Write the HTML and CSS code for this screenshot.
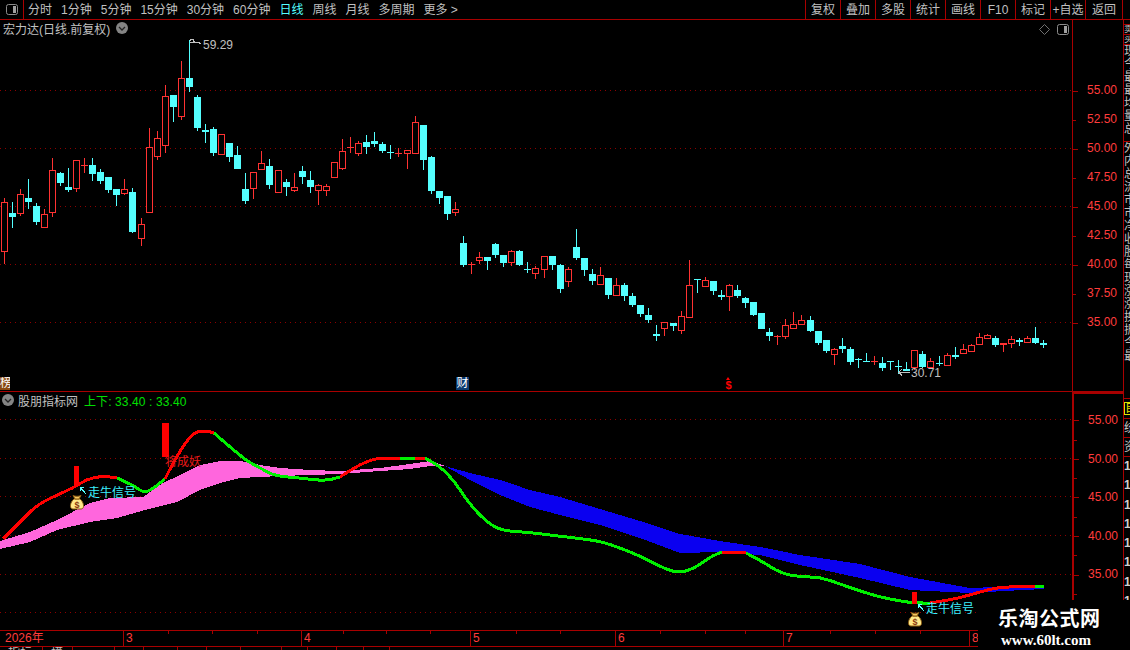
FILE: index.html
```html
<!DOCTYPE html>
<html lang="zh-CN">
<head>
    <meta charset="UTF-8">
    <title>宏力达 日线</title>
    <link rel="stylesheet" href="styles.css">
</head>
<body>
    <div class="app">
        <header class="toolbar">
            <div class="side-toggle">
                <svg class="toggle-icon" viewBox="0 0 12 11"><rect x="0.5" y="0.5" width="11" height="10" rx="2" class="toggle-frame"/><rect x="7" y="2" width="3" height="7" class="toggle-fill"/></svg>
            </div>
            <nav class="periods">
                <span>分时</span>
                <span>1分钟</span>
                <span>5分钟</span>
                <span>15分钟</span>
                <span>30分钟</span>
                <span>60分钟</span>
                <span class="active">日线</span>
                <span>周线</span>
                <span>月线</span>
                <span>多周期</span>
                <span>更多 &gt;</span>
            </nav>
            <nav class="actions">
                <span>复权</span>
                <span>叠加</span>
                <span>多股</span>
                <span>统计</span>
                <span>画线</span>
                <span>F10</span>
                <span>标记</span>
                <span>+自选</span>
                <span>返回</span>
            </nav>
        </header>

        <div class="workspace">
            <main class="charts">
                <section class="pane pane-price">
                    <div class="plot">
                        <svg class="chart" id="priceChart" viewBox="0 20 1072 371">
                            <g id="priceGrid"></g>
                            <g id="candles"></g>
                            <path class="note-line" d="M190 41v-2h3v3h-3M193 41l3 2 2-1 3 2"/>
                            <path class="note-line" d="M910 372h-11l3-3m-3 3l3 4"/>
                        </svg>
                        <div class="pane-title title-price">
                            宏力达(日线.前复权)
                            <svg class="chevron" viewBox="0 0 12 12"><circle cx="6" cy="6" r="6"/><path d="M3 5l3 3 3-3"/></svg>
                        </div>
                        <div class="price-note note-high">59.29</div>
                        <div class="price-note note-low">30.71</div>
                        <div class="pane-tools">
                            <svg class="diamond" viewBox="0 0 11 11"><path d="M5.5 0.5l5 5-5 5-5-5z"/></svg>
                            <svg class="toggle-icon" viewBox="0 0 12 11"><rect x="0.5" y="0.5" width="11" height="10" rx="2" class="toggle-frame"/><rect x="7" y="2" width="3" height="7" class="toggle-fill"/></svg>
                        </div>
                        <span class="event-tag tag-rank">榜</span>
                        <span class="event-tag tag-money">财</span>
                        <span class="event-tag tag-dollar">$</span>
                    </div>
                    <div class="axis axis-price">
                        <div class="tick">55.00</div>
                        <div class="tick minor">52.50</div>
                        <div class="tick">50.00</div>
                        <div class="tick minor">47.50</div>
                        <div class="tick">45.00</div>
                        <div class="tick minor">42.50</div>
                        <div class="tick">40.00</div>
                        <div class="tick minor">37.50</div>
                        <div class="tick">35.00</div>
                    </div>
                </section>

                <section class="pane pane-index">
                    <div class="plot">
                        <svg class="chart" id="indexChart" viewBox="0 392 1072 238">
                            <g id="indexGrid"></g>
                            <g id="bands"></g>
                            <g id="trend"></g>
                            <rect class="signal" x="74" y="466" width="5" height="20"/>
                            <rect class="signal" x="162" y="423" width="7" height="34"/>
                            <rect class="signal" x="912" y="592" width="5" height="12"/>
                            <path class="cyan-arrow" d="M86 494l-6-7m0 0v4m0-4h4"/>
                            <path class="cyan-arrow" d="M924 611l-6-7m0 0v4m0-4h4"/>
                            <g class="money-bag" transform="translate(70 495)">
                                <path class="bag-body" d="M4 4C0 7-1 14 3 14h8c4 0 3-7-1-10z"/>
                                <path class="bag-neck" d="M3 0.5c2 1 6 1 8 0l-2 3.500h-4z"/>
                                <text class="bag-sign" x="7" y="12.500">$</text>
                            </g>
                            <g class="money-bag" transform="translate(908 612)">
                                <path class="bag-body" d="M4 4C0 7-1 14 3 14h8c4 0 3-7-1-10z"/>
                                <path class="bag-neck" d="M3 0.5c2 1 6 1 8 0l-2 3.500h-4z"/>
                                <text class="bag-sign" x="7" y="12.500">$</text>
                            </g>
                        </svg>
                        <div class="pane-title title-index">
                            <svg class="chevron" viewBox="0 0 12 12"><circle cx="6" cy="6" r="6"/><path d="M3 5l3 3 3-3"/></svg>
                            股朋指标网
                            <span class="index-values">上下: 33.40 : 33.40</span>
                        </div>
                        <span class="signal-label cyan label-first">走牛信号</span>
                        <span class="signal-label cyan label-last">走牛信号</span>
                        <span class="signal-label red label-demon">将成妖</span>
                    </div>
                    <div class="axis axis-index">
                        <div class="tick">55.00</div>
                        <div class="tick">50.00</div>
                        <div class="tick">45.00</div>
                        <div class="tick">40.00</div>
                        <div class="tick">35.00</div>
                    </div>
                </section>

                <div class="timeline">
                    <span>2026年</span>
                    <span>3</span>
                    <span>4</span>
                    <span>5</span>
                    <span>6</span>
                    <span>7</span>
                    <span>8</span>
                    <svg class="time-ticks" viewBox="0 0 1072 4"><path d="M168 0v3M212 0v3M257 0v3M343 0v3M386 0v3M430 0v3M516 0v3M560 0v3M660 0v3M705 0v3M745 0v3M830 0v3M875 0v3M920 0v3"/></svg>
                </div>
            </main>

            <aside class="quote-strip">
                <div class="strip-row row-gap"></div>
                <div class="strip-row row-thin">卖</div>
                <div class="strip-row row-thin">买</div>
                <div class="strip-row row-list">现价今开最高最低均价量比总量</div>
                <div class="strip-row row-long">外盘内盘总股流通市值市盈净资收益股本每股现量涨跌涨幅换手振幅今开最</div>
                <div class="strip-row row-box"><span class="strip-flag">自</span></div>
                <div class="strip-row row-mid">统</div>
                <div class="strip-row row-mid">资</div>
                <div class="strip-digits">
                    <span>1</span><span>1</span><span>1</span><span>1</span><span>1</span><span>1</span><span>1</span><span>1</span>
                </div>
            </aside>
        </div>

        <div class="tabs">
            <span>指标</span><span>模</span><span></span><span></span><span></span><span></span><span></span><span></span><span></span><span></span><span></span><span></span>
        </div>

        <div class="watermark">
            <div class="mark-name">乐淘公式网</div>
            <div class="mark-url">www.60lt.com</div>
        </div>
    </div>

    <script src="chart.js"></script>
</body>
</html>
```

FILE: styles.css
```css
* {
    margin: 0;
    padding: 0;
    box-sizing: border-box;
}

html, body {
    height: 100%;
    background: #000;
    overflow: hidden;
}

.app {
    position: relative;
    display: flex;
    flex-direction: column;
    height: 650px;
    color: #c0c0c0;
    font-family: "Liberation Sans", "Noto Sans CJK SC", sans-serif;
    font-size: 12px;
}

/* Top toolbar */
.toolbar {
    display: flex;
    flex: none;
    height: 20px;
    line-height: 20px;
    border-bottom: 1px solid #a80000;
}

.side-toggle {
    display: flex;
    align-items: center;
    justify-content: center;
    width: 24px;
    border-right: 1px solid #a80000;
}

.toggle-icon {
    width: 12px;
    height: 11px;
}

.toggle-frame {
    fill: none;
    stroke: #8c8c8c;
}

.toggle-fill {
    fill: #a0a0a0;
}

.periods {
    display: flex;
    gap: 9px;
    padding-left: 4px;
}

.periods .active {
    color: #54ffff;
}

.actions {
    display: flex;
    margin-left: auto;
    margin-right: 7px;
}

.actions span {
    width: 35px;
    text-align: center;
    white-space: nowrap;
    border-left: 1px solid #a80000;
}

.actions span:last-child {
    width: 38px;
    border-right: 1px solid #a80000;
}

/* Chart area */
.workspace {
    display: flex;
    flex: none;
    height: 626px;
}

.charts {
    display: flex;
    flex-direction: column;
    width: 1123px;
}

.pane {
    display: flex;
}

.pane-price {
    flex: none;
    height: 372px;
    border-bottom: 1px solid #a80000;
}

.pane-index {
    flex: none;
    height: 238px;
}

.plot {
    position: relative;
    width: 1072px;
    overflow: hidden;
}

.chart {
    display: block;
    width: 1072px;
    height: 100%;
    shape-rendering: crispEdges;
}

.grid-line {
    stroke: #8c0000;
    stroke-dasharray: 1 4;
    shape-rendering: auto;
}

.note-line {
    fill: none;
    stroke: #c0c0c0;
}

.pane-title {
    position: absolute;
    display: flex;
    align-items: center;
    white-space: nowrap;
    height: 16px;
}

.title-price {
    top: 0;
    left: 3px;
    gap: 6px;
}

.title-index {
    top: 0;
    left: 2px;
    gap: 4px;
}

.chevron {
    width: 12px;
    height: 12px;
    flex: none;
}

.chevron circle {
    fill: #848484;
}

.chevron path {
    fill: none;
    stroke: #222;
    stroke-width: 1.3;
}

.index-values {
    margin-left: 2px;
    color: #00e000;
    letter-spacing: 0.1px;
}

.price-note {
    position: absolute;
}

.note-high {
    top: 18px;
    left: 203px;
}

.note-low {
    top: 346px;
    left: 911px;
}

.pane-tools {
    position: absolute;
    top: 4px;
    right: 3px;
    display: flex;
    align-items: center;
    gap: 7px;
}

.diamond {
    width: 11px;
    height: 11px;
}

.diamond path {
    fill: none;
    stroke: #707070;
}

.event-tag {
    position: absolute;
    top: 357px;
    height: 13px;
    line-height: 13px;
    text-align: center;
    overflow: hidden;
}

.tag-rank {
    left: 0;
    width: 10px;
    background: #8a4a12;
    color: #fff;
}

.tag-money {
    left: 456px;
    width: 13px;
    background: #0a3a70;
    color: #fff;
}

.tag-dollar {
    left: 724px;
    width: 9px;
    color: #ff0000;
    font-weight: bold;
    font-size: 11px;
    line-height: 17px;
}

/* little up marker above the dollar sign */
.tag-dollar::before {
    content: "";
    position: absolute;
    top: 0;
    left: 2px;
    border-left: 2px solid transparent;
    border-right: 2px solid transparent;
    border-bottom: 3px solid #ff0000;
}

.signal {
    fill: #ff0000;
}

.cyan-arrow {
    fill: none;
    stroke: #54ffff;
}

.bag-body {
    fill: #ffe98a;
    stroke: #8a5a10;
    shape-rendering: auto;
}

.bag-neck {
    fill: #f4c860;
    stroke: #8a5a10;
    shape-rendering: auto;
}

.bag-sign {
    fill: #8a3a10;
    font-size: 9px;
    font-weight: bold;
    text-anchor: middle;
}

.signal-label {
    position: absolute;
    white-space: nowrap;
}

.cyan {
    color: #3cf0ff;
}

.red {
    color: #e81818;
}

.label-first {
    top: 91px;
    left: 88px;
}

.label-last {
    top: 207px;
    left: 926px;
}

.label-demon {
    top: 60px;
    left: 165px;
}

/* Price axes */
.axis {
    flex: 1;
    color: #ff3c3c;
    border-left: 1px solid #a80000;
}

.axis-price {
    padding-top: 56px;
}

.axis-index {
    padding-top: 7px;
    border-left-width: 2px;
    border-top: 2px solid #a80000;
}

.tick {
    position: relative;
    padding-left: 14px;
}

.axis-price .tick {
    height: 29px;
    line-height: 29px;
}

.axis-index .tick {
    height: 38.6px;
    line-height: 38.6px;
}

.tick::before {
    content: "";
    position: absolute;
    left: 0;
    top: 50%;
    width: 5px;
    height: 1px;
    background: #a80000;
}

.tick.minor::before {
    width: 3px;
}

.axis-index .tick::after {
    content: "";
    position: absolute;
    left: 0;
    top: 100%;
    width: 3px;
    height: 1px;
    background: #a80000;
}

/* Time axis */
.timeline {
    position: relative;
    display: grid;
    grid-template-columns: 123px 178px 169px 145px 168px 186px 100px;
    height: 17px;
    line-height: 15px;
    color: #ff3c3c;
    border-top: 1px solid #a80000;
    border-bottom: 1px solid #a80000;
}

.timeline span {
    padding-left: 2px;
    border-left: 1px solid #a80000;
}

.timeline span:first-child {
    padding-left: 5px;
    border-left: none;
}

.time-ticks {
    position: absolute;
    top: 0;
    left: 0;
    width: 1072px;
    height: 4px;
    shape-rendering: crispEdges;
}

.time-ticks path {
    stroke: #a80000;
}

/* Clipped quote column on the right */
.quote-strip {
    flex: 1;
    display: flex;
    flex-direction: column;
    overflow: hidden;
    border-left: 1px solid #a80000;
    line-height: 13px;
}

.strip-row {
    flex: none;
    width: 24px;
    overflow: hidden;
    word-break: break-all;
    border-bottom: 1px solid #a80000;
}

.row-gap {
    height: 5px;
}

.row-thin {
    height: 10px;
    font-size: 9px;
    line-height: 9px;
}

.row-list {
    height: 97px;
}

.row-long {
    height: 257px;
}

.row-box {
    height: 20px;
    padding-top: 3px;
}

.strip-flag {
    display: block;
    width: 14px;
    height: 13px;
    color: #e0e000;
    border: 1px solid #e0e000;
    line-height: 11px;
}

.row-mid {
    height: 19px;
    line-height: 18px;
}

.strip-digits {
    display: flex;
    flex-direction: column;
    font-weight: bold;
    color: #d0d0d0;
}

.strip-digits span {
    height: 19.3px;
    line-height: 19px;
}

/* Bottom tab row, mostly below the visible area */
.tabs {
    display: grid;
    grid-template-columns: 43px 30px 42px 29px 34px 29px 34px 41px 26px 29px 27px 26px;
    flex: none;
    height: 4px;
    overflow: hidden;
    line-height: 14px;
}

.tabs span {
    padding-left: 8px;
    border-right: 1px solid #a80000;
    white-space: nowrap;
    overflow: hidden;
}

/* Site watermark over the lower right corner */
.watermark {
    position: absolute;
    top: 600px;
    left: 978px;
    right: 0;
    bottom: 0;
    padding: 8px 0 0 20px;
    background: #000;
    color: #fff;
}

.mark-name {
    font-size: 20px;
    font-weight: bold;
    line-height: 22px;
    letter-spacing: 0.5px;
    white-space: nowrap;
}

.mark-url {
    margin: 2px 0 0 3px;
    font-family: "Liberation Serif", serif;
    font-size: 15px;
    font-weight: bold;
    line-height: 16px;
    white-space: nowrap;
}
```

FILE: chart.js
```js
// x, body top, body bottom, high, low (all in page pixels), r = up, c = down
const candles = [
    [4,202,252,198,264,'r'],[12,213,217,202,228,'c'],[20,194,214,189,216,'r'],[28,198,202,179,209,'c'],
    [36,206,222,203,225,'c'],[44,214,228,209,228,'r'],[52,170,213,158,217,'r'],[60,173,183,172,186,'c'],
    [68,187,190,168,192,'c'],[76,160,189,160,192,'r'],[84,165,166,158,173,'r'],[92,165,174,158,181,'c'],
    [100,172,181,169,184,'c'],[108,177,190,177,193,'c'],[116,189,195,189,206,'c'],[124,189,194,179,195,'r'],
    [132,192,232,188,233,'c'],[141,224,239,218,246,'r'],[149,147,213,128,213,'r'],[157,138,157,131,160,'r'],
    [165,96,146,85,153,'r'],[173,95,107,95,122,'c'],[181,78,117,61,120,'r'],[189,78,87,40,92,'c'],
    [197,97,128,95,131,'c'],[205,130,132,124,143,'c'],[213,129,153,127,156,'c'],[221,134,155,134,155,'r'],
    [229,143,157,143,162,'c'],[237,155,169,146,169,'c'],[245,189,201,173,204,'c'],[253,172,189,172,199,'r'],
    [261,163,170,151,170,'r'],[269,166,185,159,189,'c'],[278,170,193,170,193,'r'],[286,182,187,179,196,'c'],
    [294,187,191,173,192,'r'],[302,171,177,166,184,'c'],[310,180,187,171,193,'c'],[318,185,191,184,205,'r'],
    [326,186,191,184,196,'r'],[334,162,178,162,178,'r'],[342,151,169,139,170,'r'],[350,147,148,137,153,'r'],
    [358,143,154,141,156,'r'],[366,142,147,135,154,'c'],[374,141,144,132,147,'c'],[382,144,151,142,153,'c'],
    [390,152,153,145,159,'c'],[398,153,154,148,157,'r'],[407,150,154,150,169,'r'],[415,122,154,116,154,'r'],
    [423,125,160,125,170,'c'],[431,157,191,156,194,'c'],[439,191,198,191,204,'c'],[447,196,214,196,220,'c'],
    [455,209,213,202,216,'r'],[463,243,265,236,267,'c'],[471,264,265,262,274,'r'],[479,257,261,252,264,'r'],
    [487,257,261,257,270,'c'],[495,244,255,243,258,'c'],[503,255,263,255,267,'c'],[511,251,263,250,266,'r'],
    [519,251,265,250,266,'c'],[527,269,270,262,273,'c'],[535,268,274,266,279,'r'],[544,256,270,256,278,'r'],
    [552,256,265,256,270,'c'],[560,265,289,264,293,'c'],[568,269,282,267,287,'r'],[576,247,258,229,260,'c'],
    [584,258,270,258,276,'c'],[592,274,281,269,285,'c'],[600,275,285,267,285,'r'],[608,278,295,278,299,'c'],
    [616,285,296,278,296,'r'],[624,285,296,283,301,'c'],[632,296,305,293,307,'c'],[640,305,314,305,317,'c'],
    [648,315,320,308,323,'c'],[656,334,336,325,341,'c'],[664,322,329,322,336,'r'],[673,323,326,323,331,'c'],
    [681,316,331,311,334,'r'],[689,285,318,260,318,'r'],[697,279,280,279,293,'c'],[705,280,287,277,287,'r'],
    [713,281,291,281,295,'c'],[721,295,297,290,300,'c'],[729,285,297,284,311,'r'],[737,290,296,285,298,'c'],
    [745,298,303,297,308,'c'],[753,302,315,302,316,'c'],[761,313,329,313,329,'c'],[769,332,336,328,341,'c'],
    [777,336,337,335,345,'r'],[785,325,337,319,339,'r'],[793,324,329,312,329,'r'],[801,320,325,315,325,'r'],
    [810,320,331,316,332,'c'],[818,331,343,331,345,'c'],[826,340,351,340,353,'c'],[834,349,355,348,365,'r'],
    [842,346,349,338,353,'c'],[850,349,362,347,365,'c'],[858,359,360,358,368,'c'],[866,361,362,353,362,'c'],
    [874,361,362,356,365,'r'],[882,363,368,357,371,'c'],[890,361,362,361,370,'c'],[898,366,367,360,374,'c'],
    [906,369,371,362,371,'c'],[914,350,368,350,370,'r'],[922,354,367,351,368,'c'],[930,361,368,358,368,'r'],
    [939,363,364,356,366,'c'],[947,355,366,353,366,'r'],[955,355,357,347,359,'c'],[963,349,354,344,354,'r'],
    [971,345,352,344,352,'r'],[979,337,345,333,345,'r'],[987,335,339,334,339,'r'],[995,338,345,336,347,'c'],
    [1003,343,345,343,352,'r'],[1011,339,344,336,348,'r'],[1019,340,342,338,346,'c'],[1027,338,343,336,343,'r'],
    [1035,338,343,327,344,'c'],[1043,343,345,340,348,'c']
];

const pinkTop = [[0,541],[30,532],[57,520],[90,503],[110,498],[143,497],[163,483],[180,475],[200,465],[220,461],[240,461],[260,465],[280,468],[310,470],[340,471],[380,468],[410,464],[430,461],[445,466]];
const pinkBottom = [[0,549],[30,542],[57,530],[90,522],[117,518],[145,510],[177,502],[200,490],[220,483],[240,478],[260,477],[280,476],[310,475],[340,474],[380,471],[410,469],[430,466],[445,466]];
const blueTop = [[445,466],[470,473],[500,480],[530,490],[560,497],[600,509],[640,521],[680,534],[720,541],[760,547],[800,555],[860,564],[910,577],[970,588],[1023,586],[1044,587]];
const blueBottom = [[445,466],[470,480],[500,495],[530,507],[560,515],[600,525],[640,538],[680,553],[720,552],[760,555],[800,565],[860,578],[910,590],[970,593],[1023,590],[1044,589]];

// trend line, colour changes along the way
const trend = [
    ['#ff0000', [[3,539],[22,520],[37,505],[55,496],[73,488],[87,479],[103,476],[117,478]]],
    ['#00f000', [[117,478],[133,485],[142,492],[150,491],[165,479]]],
    ['#ff0000', [[165,479],[173,463],[187,440],[197,431],[207,431],[214,433]]],
    ['#00f000', [[214,433],[230,447],[247,461],[260,468],[275,476],[300,478],[325,481],[340,477]]],
    ['#ff0000', [[340,477],[355,467],[375,458],[400,458]]],
    ['#00f000', [[400,458],[415,459]]],
    ['#ff0000', [[415,459],[425,458]]],
    ['#00f000', [[425,458],[440,466],[455,482],[470,505],[490,525],[505,531],[525,532],[550,535],[575,538],[600,541],[620,548],[640,556],[665,569],[680,573],[695,568],[710,557],[722,552]]],
    ['#ff0000', [[722,552],[735,552],[746,553]]],
    ['#00f000', [[746,553],[760,560],[780,573],[800,577],[820,577],[840,584],[860,591],[880,597],[900,601],[915,603],[930,603]]],
    ['#ff0000', [[930,603],[950,600],[970,595],[990,589],[1005,587],[1035,586]]],
    ['#00f000', [[1035,586],[1044,587]]]
];

function smoothPath(points) {
    let d = 'M' + points[0].join(' ');
    for (let i = 1; i < points.length - 1; i++) {
        const midX = (points[i][0] + points[i + 1][0]) / 2;
        const midY = (points[i][1] + points[i + 1][1]) / 2;
        d += 'Q' + points[i].join(' ') + ' ' + midX + ' ' + midY;
    }
    return d + 'L' + points[points.length - 1].join(' ');
}

function bandPoints(top, bottom) {
    return top.concat(bottom.slice().reverse()).map(p => p.join(',')).join(' ');
}

function gridLines(rows) {
    return rows.map(y => `<path class="grid-line" d="M0 ${y + 0.5}H1072"/>`).join('');
}

function candleMarkup([x, top, bottom, high, low, kind]) {
    const color = kind === 'r' ? '#ff3232' : '#54ffff';
    let out = `<rect x="${x}" y="${high}" width="1" height="${low - high}" fill="${color}"/>`;
    if (bottom - top < 3) {
        out += `<rect x="${x - 3}" y="${top}" width="7" height="${bottom - top}" fill="${color}"/>`;
    } else if (kind === 'r') {
        out += `<rect x="${x - 2.5}" y="${top + 0.5}" width="6" height="${bottom - top - 1}" fill="#000" stroke="${color}"/>`;
    } else {
        out += `<rect x="${x - 3}" y="${top}" width="7" height="${bottom - top}" fill="${color}"/>`;
    }
    return out;
}

document.getElementById('priceGrid').innerHTML = gridLines([90, 148, 206, 264, 322]);
document.getElementById('indexGrid').innerHTML = gridLines([419, 458, 496, 535, 574, 612]);
document.getElementById('candles').innerHTML = candles.map(candleMarkup).join('');

document.getElementById('bands').innerHTML =
    `<polygon points="${bandPoints(pinkTop, pinkBottom)}" fill="#ff66dd"/>` +
    `<polygon points="${bandPoints(blueTop, blueBottom)}" fill="#0a00f0"/>`;

document.getElementById('trend').innerHTML = trend
    .map(([color, points]) => `<path d="${smoothPath(points)}" fill="none" stroke="${color}" stroke-width="3"/>`)
    .join('');
```
